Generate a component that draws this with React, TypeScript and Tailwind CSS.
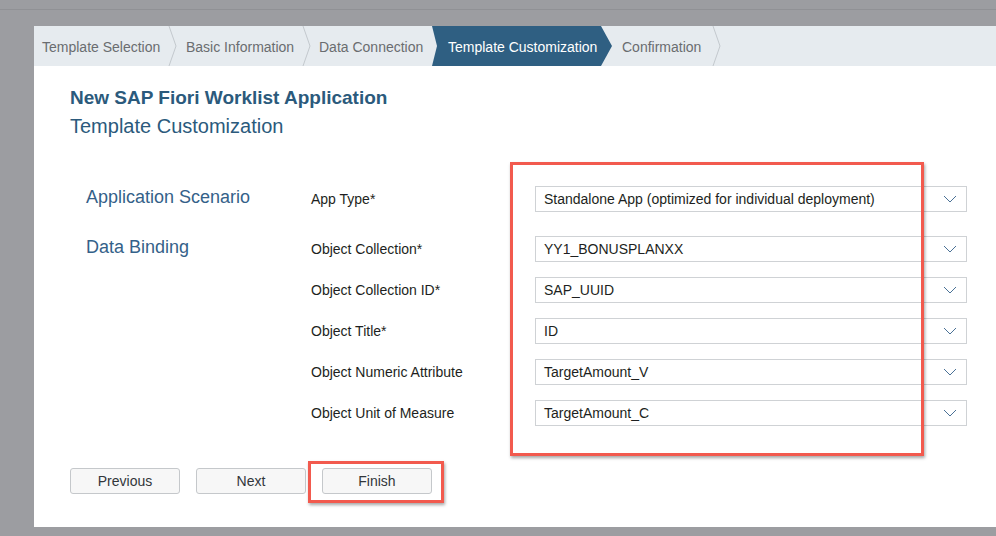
import { type ReactNode } from 'react'

const font = { fontFamily: '"Liberation Sans", Arial, sans-serif' }

const Sep = () => (
  <svg width="10" height="40" viewBox="0 0 10 40" className="shrink-0">
    <polyline points="1,0 8,20 1,40" fill="none" stroke="#c3c8cd" strokeWidth="1" />
  </svg>
)

const Chevron = () => (
  <svg width="14" height="8" viewBox="0 0 14 8" className="shrink-0">
    <polyline points="1,1 7,7 13,1" fill="none" stroke="#4a7196" strokeWidth="1" />
  </svg>
)

const fields = [
  { section: 'Application Scenario', label: 'App Type*', value: 'Standalone App (optimized for individual deployment)' },
  { section: 'Data Binding', label: 'Object Collection*', value: 'YY1_BONUSPLANXX' },
  { section: '', label: 'Object Collection ID*', value: 'SAP_UUID' },
  { section: '', label: 'Object Title*', value: 'ID' },
  { section: '', label: 'Object Numeric Attribute', value: 'TargetAmount_V' },
  { section: '', label: 'Object Unit of Measure', value: 'TargetAmount_C' },
]

const Button = ({ children }: { children: ReactNode }) => (
  <div className="flex h-[26px] w-[110px] items-center justify-center rounded-[3px] border border-[#c5c8cb] bg-[#f7f7f7] text-[14px] text-[#32363a]">
    {children}
  </div>
)

export default function App() {
  return (
    <div className="h-[536px] w-[996px] overflow-hidden bg-[#9c9da1]" style={font}>
      <div className="h-[9px]" />
      <div className="h-[17px] border-t border-[#909195]" />
      <div className="ml-[34px] h-[501px] bg-white">
        {/* steps bar */}
        <div className="flex h-[40px] items-stretch bg-[#e6ebef] text-[14px] text-[#6a6d70]">
          <div className="flex w-[134px] items-center pl-[8px] pt-[2px]">Template Selection</div>
          <Sep />
          <div className="flex w-[124px] items-center pl-[8px] pt-[2px]">Basic Information</div>
          <Sep />
          <div className="flex w-[120px] items-center pl-[7px] pt-[2px]">Data Connection</div>
          <div className="flex w-[180px] items-center bg-[#2f5f82] pl-[16px] pt-[2px] text-white [clip-path:polygon(0_0,calc(100%-11px)_0,100%_50%,calc(100%-11px)_100%,0_100%,5px_50%)]">
            Template Customization
          </div>
          <div className="flex w-[100px] items-center pl-[10px] pt-[2px]">Confirmation</div>
          <Sep />
        </div>

        <div className="pl-[36px]">
          <div className="pt-[20px] text-[19px] font-bold leading-[24px] text-[#2b5a7c]">
            New SAP Fiori Worklist Application
          </div>
          <div className="mt-[2px] text-[20px] leading-[28px] text-[#2b5a7c]">Template Customization</div>

          <div className="relative ml-[16px] mt-[46px] flex flex-col gap-[15px]">
            {fields.map((f, i) => (
              <div key={f.label} className={`flex h-[26px] items-center ${i === 1 ? 'mt-[9px]' : ''}`}>
                <div className="-mt-[4px] w-[225px] text-[18px] text-[#346189]">{f.section}</div>
                <div className="w-[224px] text-[14px] text-[#1d1f21]">{f.label}</div>
                <div className="flex h-[26px] w-[432px] items-center justify-between border border-[#cfd2d5] pl-[8px] pr-[9px] text-[14px] text-[#1d1f21]">
                  <span>{f.value}</span>
                  <Chevron />
                </div>
              </div>
            ))}
            <div className="pointer-events-none absolute left-[424px] top-[-24px] h-[294px] w-[414px] border-[3px] border-[#f25a4e] shadow-[1px_2px_3px_rgba(0,0,0,0.35)]" />
          </div>

          <div className="mt-[42px] flex gap-[16px]">
            <Button>Previous</Button>
            <Button>Next</Button>
            <div className="relative">
              <Button>Finish</Button>
              <div className="pointer-events-none absolute left-[-14px] top-[-7px] h-[42px] w-[136px] border-[3px] border-[#f25a4e] shadow-[1px_2px_3px_rgba(0,0,0,0.35)]" />
            </div>
          </div>
        </div>
      </div>
    </div>
  )
}
